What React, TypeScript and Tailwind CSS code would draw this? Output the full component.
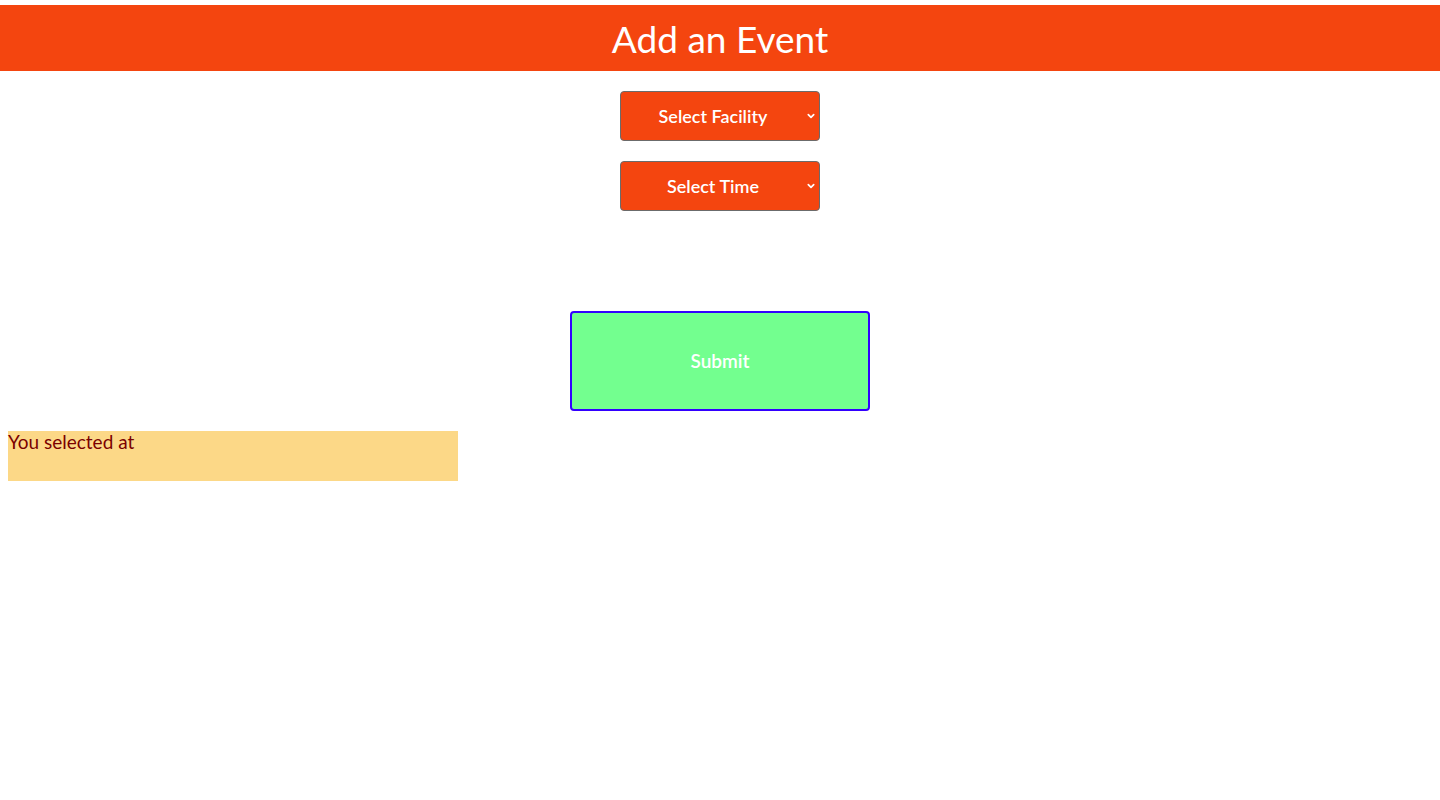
import React from "react";

function FakeSelect({ label }: { label: string }) {
  return (
    <div className="relative flex h-[50px] w-[200px] items-center justify-center rounded-[4px] border border-[#6b6b6b] bg-[#f4450f] pr-[14px] text-[18px] font-semibold text-white">
      <span>{label}</span>
      <svg
        className="absolute right-[2px] top-1/2 -translate-y-1/2"
        width="12"
        height="12"
        viewBox="0 0 12 12"
        fill="none"
      >
        <path d="M3.3 4.6 L6 7.3 L8.7 4.6" stroke="white" strokeWidth="1.7" strokeLinecap="round" strokeLinejoin="round" />
      </svg>
    </div>
  );
}

export default function App() {
  return (
    <div className="min-h-[800px] bg-white pt-[5px]" style={{ fontFamily: "Lato, 'Open Sans', sans-serif" }}>
      <header className="flex h-[66px] items-center justify-center bg-[#f4450f]">
        <h1 className="text-[37px] font-normal leading-none text-white">Add an Event</h1>
      </header>
      <div className="mt-[20px] flex flex-col items-center gap-[20px]">
        <FakeSelect label="Select Facility" />
        <FakeSelect label="Select Time" />
      </div>
      <div className="mt-[100px] flex justify-center">
        <button className="flex h-[100px] w-[300px] items-center justify-center rounded-[4px] border-2 border-[#3300ff] bg-[#73ff8f] text-[19px] font-semibold text-white">
          Submit
        </button>
      </div>
      <div className="ml-[8px] mt-[20px] h-[50px] w-[450px] bg-[#fcd887] text-[19px] leading-[22px] text-[#7a0000]">
        You selected at
      </div>
    </div>
  );
}
